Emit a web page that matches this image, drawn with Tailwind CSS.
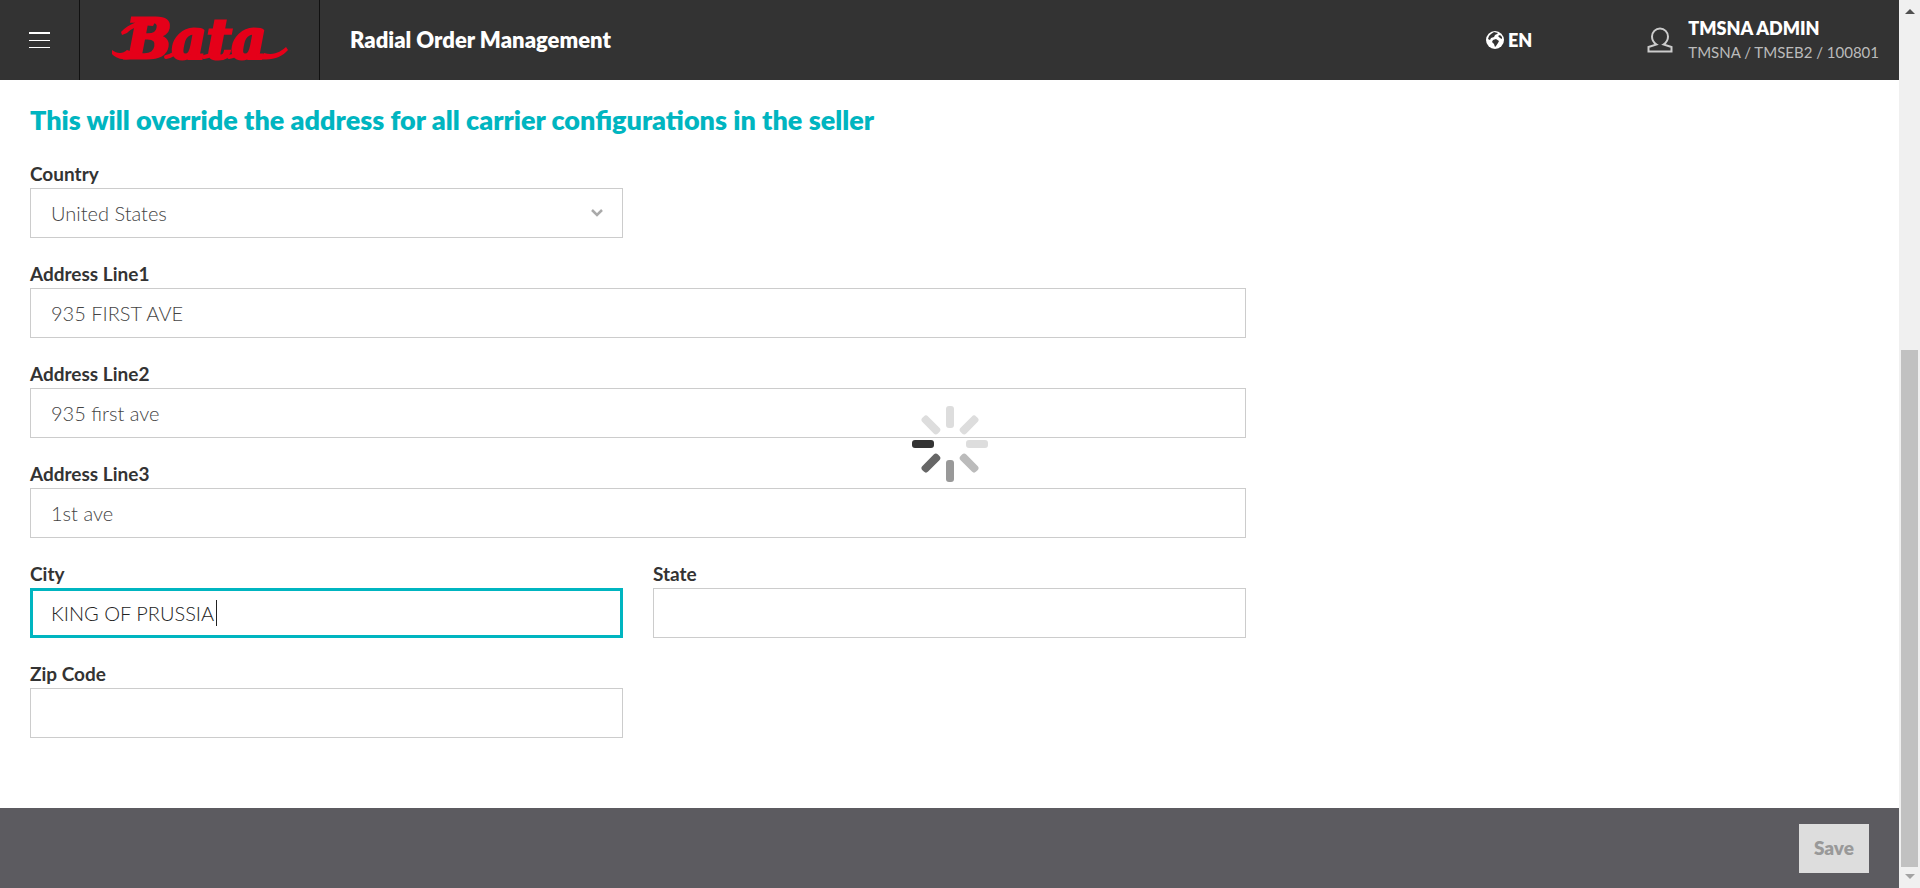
<!DOCTYPE html>
<html lang="en">
<head>
<meta charset="utf-8">
<meta name="viewport" content="width=device-width, initial-scale=1">
<title>Radial Order Management</title>
<script src="https://cdn.jsdelivr.net/npm/@tailwindcss/browser@4"></script>
</head>
<body class="flex h-screen overflow-hidden bg-white font-[Lato,sans-serif] text-[#333]">
<div class="flex min-w-0 flex-1 flex-col">
  <header class="flex h-20 shrink-0 items-stretch bg-[#333] text-white">
    <button type="button" aria-label="Menu" class="flex w-20 items-center justify-center border-r border-[#111]">
      <svg class="h-4 w-[21px]" viewBox="0 0 21 16" fill="#fff" aria-hidden="true"><path d="M0 0h21v2H0zM0 8h21v1H0zM0 15h21v1H0z"/></svg>
    </button>
    <a href="#" aria-label="Bata home" class="flex w-60 items-center justify-center border-r border-[#111]">
      <svg class="h-16 w-44 overflow-visible" viewBox="0 0 176 64" fill="#e50019" stroke="#e50019" aria-hidden="true">
        <text x="14" y="50" font-family="DejaVu Serif, serif" font-size="54" font-weight="700" font-style="italic" stroke-width="3">Bata</text>
        <path stroke="none" d="M0 42C5 46 11 46 15 42L30 47C20 53 6 53 0 46ZM9 24C18 15 30 11 44 12L41 18C29 16 20 20 15 25L10 27ZM152 45C163 48 169 43 174 39L176 42C170 49 160 53 148 51Z"/>
        <path fill="none" stroke-width="4" stroke-linecap="round" d="M54 49C60 48 64 45 67 40M92 49C98 48 102 45 104 41M117 49C123 48 127 45 129 40"/>
      </svg>
    </a>
    <div class="flex min-w-0 flex-1 items-center justify-between pl-[30px] pr-5">
      <h1 class="text-[22px] font-extrabold leading-6">Radial Order Management</h1>
      <div class="flex items-center gap-[115px]">
        <button type="button" class="flex items-center gap-1 text-lg font-extrabold leading-6">
          <svg class="size-[18px]" viewBox="0 0 18 18" aria-hidden="true"><circle cx="9" cy="9" r="9" fill="#fff"/><path fill="#333" d="M5 3l3-2 4 1-1 1-2 1-1 2-3 1-1 2-2-1 1-3zM7 9l3-1 3 2-1 2-2 3-1 1-1-3-2-2zM12 5l2-1 2 2v2l-2-1z"/></svg>
          <span>EN</span>
        </button>
        <button type="button" class="flex items-center gap-[15px] text-left">
          <svg class="h-[26px] w-[26px]" viewBox="0 0 26 26" fill="none" stroke="#ccc" stroke-width="2" aria-hidden="true"><path d="M9.500 17.500C6.500 15.500 5 12.500 5 9.500a8 8 0 0 1 16 0c0 3-1.500 6-4.500 8l8 2.500v4.500h-23V20z"/></svg>
          <span class="flex flex-col">
            <span class="text-lg font-extrabold leading-6">TMSNA ADMIN</span>
            <span class="text-[15px] leading-6 text-[#bbb]">TMSNA / TMSEB2 / 100801</span>
          </span>
        </button>
      </div>
    </div>
  </header>

  <main class="relative min-h-0 flex-1 px-[30px] pt-6">
    <h2 class="text-[27px] font-extrabold leading-8 text-[#00b5c0]">This will override the address for all carrier configurations in the seller</h2>
    <form class="mt-[26px] grid grid-cols-12 gap-x-[30px] gap-y-6">
      <div class="col-span-4 flex flex-col gap-[2px]">
        <label for="country" class="text-[19px] font-bold leading-6">Country</label>
        <div class="relative flex">
          <select id="country" class="h-[50px] w-full appearance-none border border-[#ccc] bg-white px-5 text-xl font-light text-[#444]"><option>United States</option></select>
          <svg class="pointer-events-none absolute right-5 top-5 h-[10px] w-3" viewBox="0 0 12 10" fill="none" stroke="#aaa" stroke-width="2.500" aria-hidden="true"><path d="M1 2l5 5 5-5"/></svg>
        </div>
      </div>
      <div class="col-span-8 col-start-1 flex flex-col gap-[2px]">
        <label for="line1" class="text-[19px] font-bold leading-6">Address Line1</label>
        <input id="line1" type="text" value="935 FIRST AVE" class="h-[50px] w-full border border-[#ccc] px-5 text-xl font-light text-[#444]">
      </div>
      <div class="col-span-8 col-start-1 flex flex-col gap-[2px]">
        <label for="line2" class="text-[19px] font-bold leading-6">Address Line2</label>
        <input id="line2" type="text" value="935 first ave" class="h-[50px] w-full border border-[#ccc] px-5 text-xl font-light text-[#444]">
      </div>
      <div class="col-span-8 col-start-1 flex flex-col gap-[2px]">
        <label for="line3" class="text-[19px] font-bold leading-6">Address Line3</label>
        <input id="line3" type="text" value="1st ave" class="h-[50px] w-full border border-[#ccc] px-5 text-xl font-light text-[#444]">
      </div>
      <div class="col-span-4 col-start-1 flex flex-col gap-[2px]">
        <label for="city" class="text-[19px] font-bold leading-6">City</label>
        <div class="relative flex">
          <input id="city" type="text" value="KING OF PRUSSIA" class="h-[50px] w-full border-3 border-[#00b5c0] px-[18px] text-xl font-light text-[#222]">
          <span class="absolute left-[186px] top-3 h-[26px] w-px bg-[#222]"></span>
        </div>
      </div>
      <div class="col-span-4 flex flex-col gap-[2px]">
        <label for="state" class="text-[19px] font-bold leading-6">State</label>
        <input id="state" type="text" class="h-[50px] w-full border border-[#ccc] px-5 text-xl font-light text-[#444]">
      </div>
      <div class="col-span-4 col-start-1 flex flex-col gap-[2px]">
        <label for="zip" class="text-[19px] font-bold leading-6">Zip Code</label>
        <input id="zip" type="text" class="h-[50px] w-full border border-[#ccc] px-5 text-xl font-light text-[#444]">
      </div>
    </form>
    <div role="status" aria-label="Loading" class="absolute inset-0 flex items-center justify-center">
      <svg class="size-[76px]" viewBox="-38 -38 76 76" aria-hidden="true">
        <g fill="#ddd">
          <rect x="-4" y="-38" width="8" height="22" rx="3"/>
          <rect x="-4" y="-38" width="8" height="22" rx="3" transform="rotate(45)"/>
          <rect x="-4" y="-38" width="8" height="22" rx="3" transform="rotate(90)"/>
          <rect x="-4" y="-38" width="8" height="22" rx="3" transform="rotate(315)"/>
        </g>
        <rect x="-4" y="-38" width="8" height="22" rx="3" fill="#bbb" transform="rotate(135)"/>
        <rect x="-4" y="-38" width="8" height="22" rx="3" fill="#999" transform="rotate(180)"/>
        <rect x="-4" y="-38" width="8" height="22" rx="3" fill="#666" transform="rotate(225)"/>
        <rect x="-4" y="-38" width="8" height="22" rx="3" fill="#333" transform="rotate(270)"/>
      </svg>
    </div>
  </main>

  <footer class="flex h-20 shrink-0 items-center justify-end bg-[#5c5b60] px-[30px]">
    <button type="button" disabled class="h-[49px] bg-[#ddd] px-[15px] text-[19px] font-extrabold text-[#999]">Save</button>
  </footer>
</div>

<div aria-hidden="true" class="flex w-[21px] shrink-0 flex-col items-center bg-[#f0f0f0]">
  <svg class="mt-[9px] h-[5px] w-[10px] shrink-0" viewBox="0 0 10 5" fill="#505050"><path d="M0 5L5 0l5 5z"/></svg>
  <div class="h-[336px] shrink-0"></div>
  <div class="w-[17px] flex-1 bg-[#c1c1c1]"></div>
  <svg class="mb-[9px] mt-[7px] h-[5px] w-[10px] shrink-0" viewBox="0 0 10 5" fill="#a3a3a3"><path d="M0 0l5 5 5-5z"/></svg>
</div>
</body>
</html>
